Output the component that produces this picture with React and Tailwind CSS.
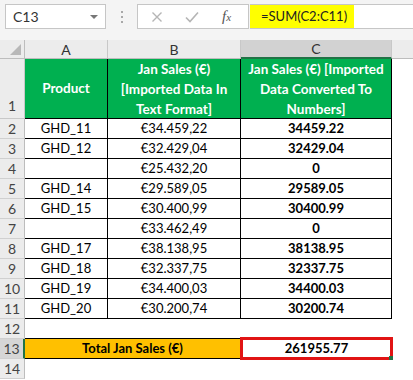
import React from "react";

const rows = [
  { n: 2, a: "GHD_11", b: "€34.459,22", c: "34459.22" },
  { n: 3, a: "GHD_12", b: "€32.429,04", c: "32429.04" },
  { n: 4, a: "", b: "€25.432,20", c: "0" },
  { n: 5, a: "GHD_14", b: "€29.589,05", c: "29589.05" },
  { n: 6, a: "GHD_15", b: "€30.400,99", c: "30400.99" },
  { n: 7, a: "", b: "€33.462,49", c: "0" },
  { n: 8, a: "GHD_17", b: "€38.138,95", c: "38138.95" },
  { n: 9, a: "GHD_18", b: "€32.337,75", c: "32337.75" },
  { n: 10, a: "GHD_19", b: "€34.400,03", c: "34400.03" },
  { n: 11, a: "GHD_20", b: "€30.200,74", c: "30200.74" },
];

const font = { fontFamily: "Lato, 'Open Sans', sans-serif" };

const RowHead = ({ n, active }) => (
  <div
    className={
      "w-[25px] shrink-0 flex items-center justify-center border-b border-[#d0d0d0] text-[14px] text-[#444] " +
      (active
        ? "bg-[#d6d6d6] border-r-2 border-r-[#217346]"
        : "bg-[#ececec] border-r border-r-[#bdbdbd]")
    }
  >
    {n}
  </div>
);

const FormulaBar = () => (
  <div className="h-[40px] bg-[#f4f4f4] flex items-start pt-[4px] pl-[5px]">
    <div className="w-[101px] h-[25px] bg-white border border-[#c6c6c6] flex items-center justify-between pl-[7px] pr-[7px] text-[14px] text-[#333]">
      <span>C13</span>
      <span className="w-0 h-0 border-l-[4px] border-r-[4px] border-t-[4px] border-l-transparent border-r-transparent border-t-[#777]" />
    </div>
    <div className="w-[31px] h-[25px] flex flex-col items-center justify-center gap-[3px]">
      <span className="w-[2px] h-[2px] bg-[#a8a8a8]" />
      <span className="w-[2px] h-[2px] bg-[#a8a8a8]" />
      <span className="w-[2px] h-[2px] bg-[#a8a8a8]" />
    </div>
    <div className="w-[112px] h-[25px] bg-white border border-[#c6c6c6] flex items-center">
      <svg width="12" height="12" viewBox="0 0 12 12" className="ml-[13px]">
        <path d="M1.5 1.5 L10.5 10.5 M10.5 1.5 L1.5 10.5" stroke="#b5b5b5" strokeWidth="1.4" />
      </svg>
      <svg width="14" height="12" viewBox="0 0 14 12" className="ml-[22px]">
        <path d="M1 6.5 L5 10.5 L13 1.5" stroke="#b5b5b5" strokeWidth="1.6" fill="none" />
      </svg>
      <span
        className="ml-[23px] italic text-[15px] text-[#555]"
        style={{ fontFamily: "'Liberation Serif', serif" }}
      >
        f<span className="text-[11px]">x</span>
      </span>
    </div>
    <div className="flex-1 h-[25px] bg-white border-y border-[#c6c6c6] ml-[1px] flex">
      <div className="w-[104px] h-full bg-[#ffff00] flex items-center pl-[11px] text-[13px] text-[#222]">
        =SUM(C2:C11)
      </div>
    </div>
  </div>
);

const ColHeader = () => (
  <div className="h-[19px] flex bg-[#ececec] text-[14px] text-[#333] border-b border-[#bdbdbd]">
    <div className="w-[25px] shrink-0 border-r border-[#bdbdbd] flex items-end justify-end pr-[3px] pb-[3px]">
      <svg width="11" height="11" viewBox="0 0 11 11">
        <path d="M11 0 L11 11 L0 11 Z" fill="#b8b8b8" />
      </svg>
    </div>
    <div className="w-[83px] shrink-0 border-r border-[#c8c8c8] flex items-center justify-center">A</div>
    <div className="w-[133px] shrink-0 border-r border-[#c8c8c8] flex items-center justify-center">B</div>
    <div className="w-[151px] shrink-0 bg-[#d2d2d2] border-r border-[#c8c8c8] border-b-2 border-b-[#217346] -mb-[1px] flex items-center justify-center">C</div>
    <div className="flex-1" />
  </div>
);

export default function App() {
  return (
    <div className="w-[413px] h-[380px] overflow-hidden bg-white" style={font}>
      <FormulaBar />
      <ColHeader />

      {/* header row 1 */}
      <div className="h-[60px] flex">
        <div className="w-[25px] shrink-0 flex items-end justify-center pb-[2px] bg-[#ececec] border-r border-b border-[#c8c8c8] text-[14px] text-[#444]">
          1
        </div>
        <div className="w-[83px] shrink-0 bg-[#00b050] border-r border-b border-black flex items-center justify-center font-bold text-white text-[13.5px]">
          Product
        </div>
        <div className="w-[133px] shrink-0 bg-[#00b050] border-r border-b border-black flex items-center justify-center text-center font-bold text-white text-[13.5px] leading-[20px]">
          Jan Sales (€)
          <br />
          [Imported Data In
          <br />
          Text Format]
        </div>
        <div className="w-[151px] shrink-0 bg-[#00b050] border-r border-b border-black flex items-center justify-center text-center font-bold text-white text-[13.5px] leading-[20px]">
          Jan Sales (€) [Imported
          <br />
          Data Converted To
          <br />
          Numbers]
        </div>
      </div>

      {rows.map((r) => (
        <div key={r.n} className="h-[20px] flex text-[13px] text-black">
          <RowHead n={r.n} />
          <div className="w-[83px] shrink-0 border-r border-b border-black flex items-center justify-center">
            {r.a}
          </div>
          <div className="w-[133px] shrink-0 border-r border-b border-black flex items-center justify-center">
            {r.b}
          </div>
          <div className="w-[151px] shrink-0 border-r border-b border-black flex items-center justify-center font-bold">
            {r.c}
          </div>
        </div>
      ))}

      <div className="h-[20px] flex">
        <RowHead n={12} />
      </div>

      <div className="h-[20px] flex text-[13px]">
        <RowHead n={13} active />
        <div className="w-[215px] shrink-0 bg-[#ffc000] border-y border-black -mt-[1px] h-[21px] flex items-center justify-center font-bold">
          Total Jan Sales (€)
        </div>
        <div className="w-[153px] shrink-0 h-[23px] -mt-[2px] border-[3px] border-[#e11414] relative flex items-center justify-center font-bold">
          261955.77
          <span className="absolute right-[-3px] bottom-[-3px] w-[4px] h-[4px] bg-[#217346]" />
        </div>
      </div>

      <div className="h-[20px] flex">
        <RowHead n={14} />
      </div>
    </div>
  );
}
